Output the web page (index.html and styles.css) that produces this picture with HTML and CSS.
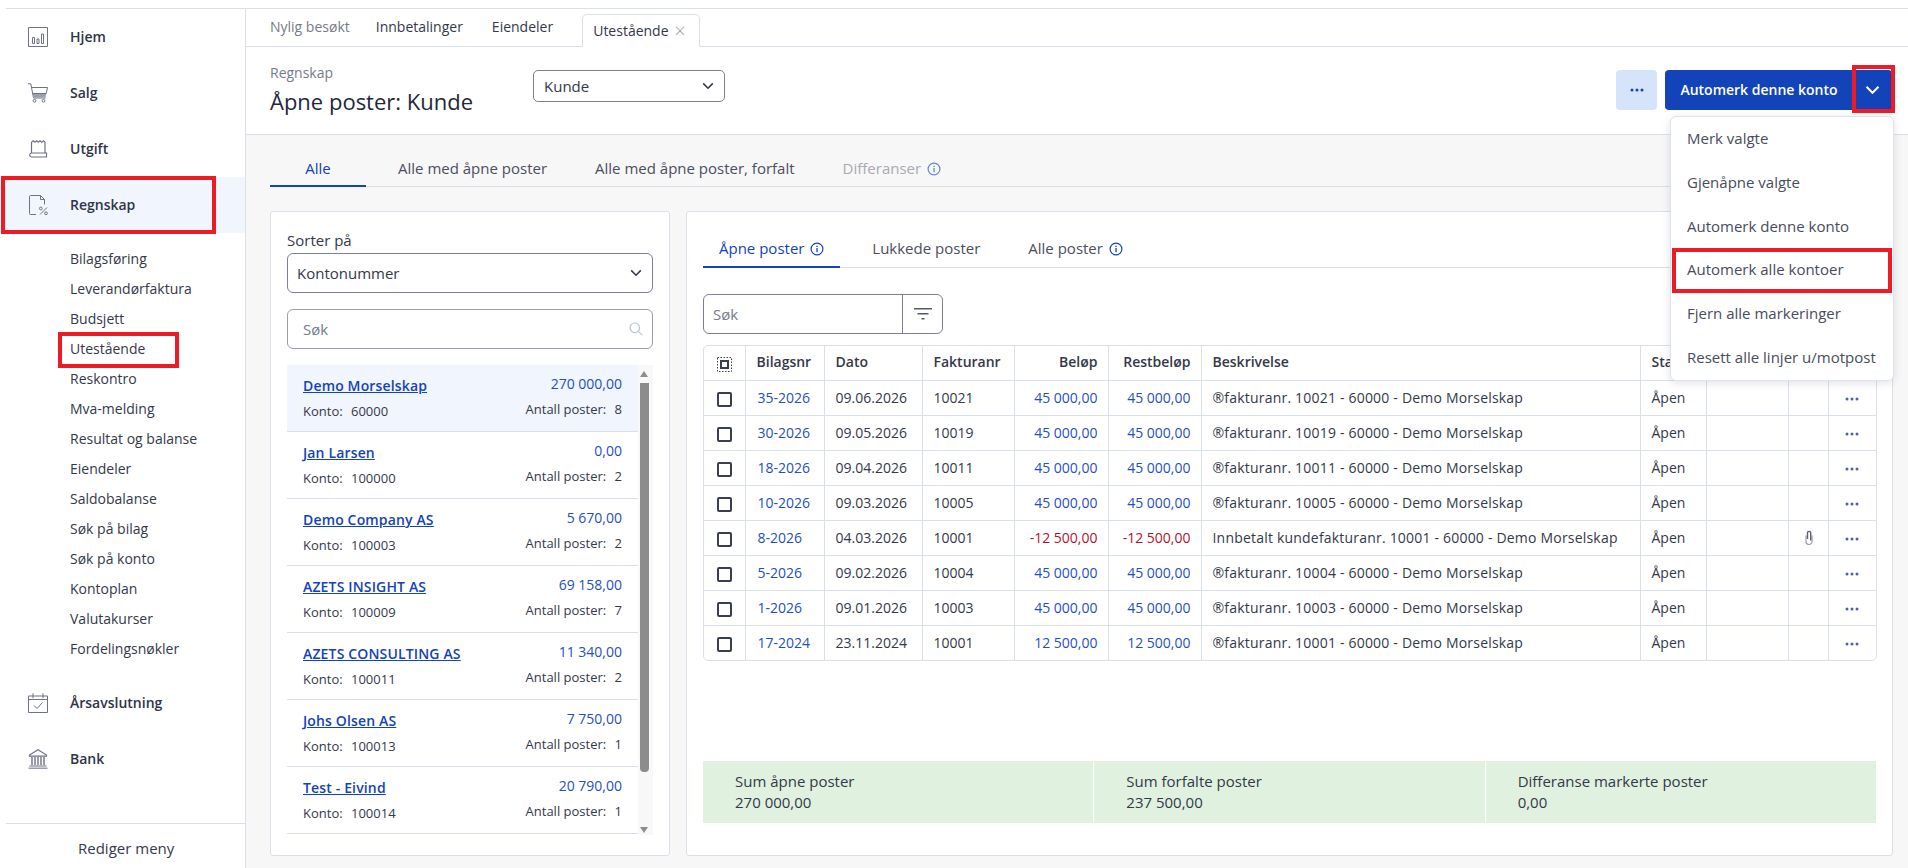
FILE: index.html
```html
<!DOCTYPE html>
<html lang="nb">
<head>
    <meta charset="UTF-8">
    <title>Åpne poster: Kunde</title>
    <link rel="stylesheet" href="styles.css">
</head>
<body>
    <svg class="sprite" xmlns="http://www.w3.org/2000/svg">
        <symbol id="i-info" viewBox="0 0 14 14">
            <circle cx="7" cy="7" r="5.9" fill="none" stroke="currentColor" stroke-width="1.2"/>
            <rect x="6.4" y="6" width="1.3" height="4.2" fill="currentColor"/>
            <rect x="6.4" y="3.7" width="1.3" height="1.4" fill="currentColor"/>
        </symbol>
        <symbol id="i-chevron" viewBox="0 0 12 8">
            <path d="M1.2 1.4 6 6.2l4.800-4.800" fill="none" stroke="currentColor" stroke-width="1.6"/>
        </symbol>
        <symbol id="i-dots" viewBox="0 0 14 4">
            <circle cx="2" cy="2" r="1.5" fill="currentColor"/>
            <circle cx="7" cy="2" r="1.5" fill="currentColor"/>
            <circle cx="12" cy="2" r="1.5" fill="currentColor"/>
        </symbol>
    </svg>

    <div class="app">
        <nav class="sidebar">
            <a class="nav-item">
                <svg class="nav-icon" viewBox="0 0 20 20"><path d="M.5.5h19v19H.5z" fill="none" stroke="#6d7385"/><path d="M4.5 10.5h2v6h-2zM9 12h2v4.500H9zM13.500 7h2v9.500h-2z" fill="none" stroke="#6d7385"/></svg>
                <span>Hjem</span>
            </a>
            <a class="nav-item">
                <svg class="nav-icon" viewBox="0 0 20 20"><path d="M0 .8h2.800l2.700 14.200h12" fill="none" stroke="#6d7385"/><path d="M3.500 4.500h16l-1.300 6H4.600" fill="none" stroke="#6d7385"/><path d="M4.800 11h13.400l-.7 3.500H5.500z" fill="#9a9fad"/><circle cx="6.500" cy="17.800" r="1.400" fill="none" stroke="#6d7385"/><circle cx="15.500" cy="17.800" r="1.400" fill="none" stroke="#6d7385"/></svg>
                <span>Salg</span>
            </a>
            <a class="nav-item">
                <svg class="nav-icon" viewBox="0 0 20 20"><path d="M3.500 14V3M17 14V3M3.500 3.200 5.200 1.800l1.700 1.400 1.700-1.400 1.700 1.400 1.700-1.400 1.700 1.400 1.700-1.400L17 3.200" fill="none" stroke="#6d7385" stroke-width="1.200"/><path d="M18.500 14H3.500a2 2 0 0 0-1.800 2 2 2 0 0 0 1.800 2h15z" fill="none" stroke="#6d7385" stroke-width="1.200"/></svg>
                <span>Utgift</span>
            </a>
            <a class="nav-item nav-current">
                <svg class="nav-icon" viewBox="0 0 20 20"><path d="M8 19.500H2.500a1 1 0 0 1-1-1v-17a1 1 0 0 1 1-1h10v4h4v5" fill="none" stroke="#6d7385"/><path d="M12.500.5l4 4" stroke="#6d7385"/><path d="M12 19.500l7-7" stroke="#6d7385"/><circle cx="12.800" cy="13.500" r="1.400" fill="none" stroke="#6d7385"/><circle cx="18" cy="18.300" r="1.400" fill="none" stroke="#6d7385"/></svg>
                <span>Regnskap</span>
            </a>
            <div class="subnav">
                <a>Bilagsføring</a>
                <a>Leverandørfaktura</a>
                <a>Budsjett</a>
                <a>Utestående</a>
                <a>Reskontro</a>
                <a>Mva-melding</a>
                <a>Resultat og balanse</a>
                <a>Eiendeler</a>
                <a>Saldobalanse</a>
                <a>Søk på bilag</a>
                <a>Søk på konto</a>
                <a>Kontoplan</a>
                <a>Valutakurser</a>
                <a>Fordelingsnøkler</a>
            </div>
            <a class="nav-item">
                <svg class="nav-icon" viewBox="0 0 20 20"><path d="M.5 3h19v16.500H.5zM.5 6.500h19M5 .3v5M15 .3v5" fill="none" stroke="#6d7385"/><path d="M6 12.500l3 3 5.500-6" fill="none" stroke="#6d7385"/></svg>
                <span>Årsavslutning</span>
            </a>
            <a class="nav-item">
                <svg class="nav-icon" viewBox="0 0 20 20"><path d="M10 .8 18.500 6v1.200h-17V6z" fill="none" stroke="#6d7385" stroke-width="1.200"/><path d="M1.500 17h17M.5 19.300h19" stroke="#9a9fad" stroke-width="1.600"/><path d="M4 8v8M7 8v8M10 8v8M13 8v8M16 8v8" stroke="#6d7385" stroke-width="1.400"/></svg>
                <span>Bank</span>
            </a>
            <a class="edit-menu">Rediger meny</a>
        </nav>

        <main class="main">
            <div class="recent">
                <span class="recent-label">Nylig besøkt</span>
                <a class="recent-link">Innbetalinger</a>
                <a class="recent-link">Eiendeler</a>
                <a class="recent-tab">Utestående <span class="tab-close">×</span></a>
            </div>

            <header class="page-head">
                <div class="page-title">
                    <div class="crumb">Regnskap</div>
                    <h1>Åpne poster: Kunde</h1>
                </div>
                <div class="type-select">Kunde <svg class="chev"><use href="#i-chevron"/></svg></div>
                <div class="head-actions">
                    <button class="btn-more"><svg class="dots"><use href="#i-dots"/></svg></button>
                    <div class="btn-split">
                        <button class="btn-primary">Automerk denne konto</button>
                        <button class="btn-caret"><svg class="chev"><use href="#i-chevron"/></svg></button>
                    </div>
                </div>
            </header>

            <div class="content">
                <div class="tabs">
                    <a class="tab tab-active tab-first">Alle</a>
                    <a class="tab">Alle med åpne poster</a>
                    <a class="tab">Alle med åpne poster, forfalt</a>
                    <a class="tab tab-muted">Differanser <svg class="info"><use href="#i-info"/></svg></a>
                </div>

                <div class="panels">
                    <section class="panel accounts">
                        <label class="sort-label">Sorter på</label>
                        <div class="field field-select">Kontonummer <svg class="chev"><use href="#i-chevron"/></svg></div>
                        <div class="field field-search">
                            <span class="placeholder">Søk</span>
                            <svg class="search-icon" viewBox="0 0 14 14"><circle cx="5.800" cy="5.800" r="4.800" fill="none" stroke="currentColor" stroke-width="1.200"/><path d="M9.300 9.300 13.200 13.200" stroke="currentColor" stroke-width="1.200"/></svg>
                        </div>
                        <div class="account-wrap">
                            <div class="account-list">
                                <div class="account account-current">
                                    <div class="acc-left"><a class="acc-name">Demo Morselskap</a><div class="acc-meta">Konto: <span>60000</span></div></div>
                                    <div class="acc-right"><div class="acc-sum">270 000,00</div><div class="acc-meta">Antall poster: <span>8</span></div></div>
                                </div>
                                <div class="account">
                                    <div class="acc-left"><a class="acc-name">Jan Larsen</a><div class="acc-meta">Konto: <span>100000</span></div></div>
                                    <div class="acc-right"><div class="acc-sum">0,00</div><div class="acc-meta">Antall poster: <span>2</span></div></div>
                                </div>
                                <div class="account">
                                    <div class="acc-left"><a class="acc-name">Demo Company AS</a><div class="acc-meta">Konto: <span>100003</span></div></div>
                                    <div class="acc-right"><div class="acc-sum">5 670,00</div><div class="acc-meta">Antall poster: <span>2</span></div></div>
                                </div>
                                <div class="account">
                                    <div class="acc-left"><a class="acc-name">AZETS INSIGHT AS</a><div class="acc-meta">Konto: <span>100009</span></div></div>
                                    <div class="acc-right"><div class="acc-sum">69 158,00</div><div class="acc-meta">Antall poster: <span>7</span></div></div>
                                </div>
                                <div class="account">
                                    <div class="acc-left"><a class="acc-name">AZETS CONSULTING AS</a><div class="acc-meta">Konto: <span>100011</span></div></div>
                                    <div class="acc-right"><div class="acc-sum">11 340,00</div><div class="acc-meta">Antall poster: <span>2</span></div></div>
                                </div>
                                <div class="account">
                                    <div class="acc-left"><a class="acc-name">Johs Olsen AS</a><div class="acc-meta">Konto: <span>100013</span></div></div>
                                    <div class="acc-right"><div class="acc-sum">7 750,00</div><div class="acc-meta">Antall poster: <span>1</span></div></div>
                                </div>
                                <div class="account">
                                    <div class="acc-left"><a class="acc-name">Test - Eivind</a><div class="acc-meta">Konto: <span>100014</span></div></div>
                                    <div class="acc-right"><div class="acc-sum">20 790,00</div><div class="acc-meta">Antall poster: <span>1</span></div></div>
                                </div>
                            </div>
                            <div class="scrollbar">
                                <span class="arrow-up"></span>
                                <span class="thumb"></span>
                                <span class="arrow-down"></span>
                            </div>
                        </div>
                    </section>

                    <section class="panel entries">
                        <div class="subtabs">
                            <a class="subtab subtab-active">Åpne poster <svg class="info"><use href="#i-info"/></svg></a>
                            <a class="subtab">Lukkede poster</a>
                            <a class="subtab">Alle poster <svg class="info"><use href="#i-info"/></svg></a>
                        </div>
                        <div class="table-search">
                            <span class="placeholder">Søk</span>
                            <span class="filter-btn">
                                <svg viewBox="0 0 18 12" class="filter-icon"><path d="M0 0h18v1.600H0zM3.500 5h11v1.600h-11zM7.500 10h3v1.600h-3z" fill="#555a6a"/></svg>
                            </span>
                        </div>
                        <div class="table-wrap">
                            <table class="entry-table">
                                <colgroup>
                                    <col class="c-check"><col class="c-bilag"><col class="c-dato"><col class="c-faktura"><col class="c-belop"><col class="c-rest"><col class="c-desc"><col class="c-status"><col class="c-blank"><col class="c-clip"><col class="c-more">
                                </colgroup>
                                <thead>
                                    <tr>
                                        <th class="check-cell"><svg class="select-all" viewBox="0 0 15 15"><path d="M.5.500h14v14H.5z" fill="none" stroke="#3a3f50" stroke-dasharray="1.500 1.500"/><path d="M4 4h7v7H4z" fill="none" stroke="#3a3f50" stroke-width="2"/></svg></th>
                                        <th>Bilagsnr</th><th>Dato</th><th>Fakturanr</th><th class="num">Beløp</th><th class="num">Restbeløp</th><th>Beskrivelse</th><th>Status</th><th></th><th></th><th></th>
                                    </tr>
                                </thead>
                                <tbody>
                                    <tr>
                                        <td class="check-cell"><span class="checkbox"></span></td><td class="blue">35-2026</td><td>09.06.2026</td><td>10021</td><td class="num blue">45 000,00</td><td class="num blue">45 000,00</td><td class="desc">®fakturanr. 10021 - 60000 - Demo Morselskap</td><td>Åpen</td><td></td><td></td><td class="more-cell"><svg class="dots"><use href="#i-dots"/></svg></td>
                                    </tr>
                                    <tr>
                                        <td class="check-cell"><span class="checkbox"></span></td><td class="blue">30-2026</td><td>09.05.2026</td><td>10019</td><td class="num blue">45 000,00</td><td class="num blue">45 000,00</td><td class="desc">®fakturanr. 10019 - 60000 - Demo Morselskap</td><td>Åpen</td><td></td><td></td><td class="more-cell"><svg class="dots"><use href="#i-dots"/></svg></td>
                                    </tr>
                                    <tr>
                                        <td class="check-cell"><span class="checkbox"></span></td><td class="blue">18-2026</td><td>09.04.2026</td><td>10011</td><td class="num blue">45 000,00</td><td class="num blue">45 000,00</td><td class="desc">®fakturanr. 10011 - 60000 - Demo Morselskap</td><td>Åpen</td><td></td><td></td><td class="more-cell"><svg class="dots"><use href="#i-dots"/></svg></td>
                                    </tr>
                                    <tr>
                                        <td class="check-cell"><span class="checkbox"></span></td><td class="blue">10-2026</td><td>09.03.2026</td><td>10005</td><td class="num blue">45 000,00</td><td class="num blue">45 000,00</td><td class="desc">®fakturanr. 10005 - 60000 - Demo Morselskap</td><td>Åpen</td><td></td><td></td><td class="more-cell"><svg class="dots"><use href="#i-dots"/></svg></td>
                                    </tr>
                                    <tr>
                                        <td class="check-cell"><span class="checkbox"></span></td><td class="blue">8-2026</td><td>04.03.2026</td><td>10001</td><td class="num red">-12 500,00</td><td class="num red">-12 500,00</td><td class="desc">Innbetalt kundefakturanr. 10001 - 60000 - Demo Morselskap</td><td>Åpen</td><td></td>
                                        <td class="clip-cell"><svg class="clip" viewBox="0 0 8 15"><path d="M1 5.500v6a3 3 0 0 0 6 0v-6" fill="none" stroke="#9a9fad" stroke-width="1.200"/><path d="M2.500 9V3a1.600 1.600 0 0 1 3.200 0v7.500" fill="none" stroke="#5c6070" stroke-width="1.400"/></svg></td>
                                        <td class="more-cell"><svg class="dots"><use href="#i-dots"/></svg></td>
                                    </tr>
                                    <tr>
                                        <td class="check-cell"><span class="checkbox"></span></td><td class="blue">5-2026</td><td>09.02.2026</td><td>10004</td><td class="num blue">45 000,00</td><td class="num blue">45 000,00</td><td class="desc">®fakturanr. 10004 - 60000 - Demo Morselskap</td><td>Åpen</td><td></td><td></td><td class="more-cell"><svg class="dots"><use href="#i-dots"/></svg></td>
                                    </tr>
                                    <tr>
                                        <td class="check-cell"><span class="checkbox"></span></td><td class="blue">1-2026</td><td>09.01.2026</td><td>10003</td><td class="num blue">45 000,00</td><td class="num blue">45 000,00</td><td class="desc">®fakturanr. 10003 - 60000 - Demo Morselskap</td><td>Åpen</td><td></td><td></td><td class="more-cell"><svg class="dots"><use href="#i-dots"/></svg></td>
                                    </tr>
                                    <tr>
                                        <td class="check-cell"><span class="checkbox"></span></td><td class="blue">17-2024</td><td>23.11.2024</td><td>10001</td><td class="num blue">12 500,00</td><td class="num blue">12 500,00</td><td class="desc">®fakturanr. 10001 - 60000 - Demo Morselskap</td><td>Åpen</td><td></td><td></td><td class="more-cell"><svg class="dots"><use href="#i-dots"/></svg></td>
                                    </tr>
                                </tbody>
                            </table>
                        </div>
                        <div class="sum-bar">
                            <div class="sum-cell">Sum åpne poster<br>270 000,00</div>
                            <div class="sum-cell">Sum forfalte poster<br>237 500,00</div>
                            <div class="sum-cell">Differanse markerte poster<br>0,00</div>
                        </div>
                    </section>
                </div>
            </div>
        </main>
    </div>

    <div class="action-menu">
        <a>Merk valgte</a>
        <a>Gjenåpne valgte</a>
        <a>Automerk denne konto</a>
        <a>Automerk alle kontoer</a>
        <a>Fjern alle markeringer</a>
        <a>Resett alle linjer u/motpost</a>
    </div>

    <!-- red annotation boxes drawn on top of the screenshot -->
    <div class="mark mark-regnskap"></div>
    <div class="mark mark-utestaende"></div>
    <div class="mark mark-caret"></div>
    <div class="mark mark-menu"></div>
</body>
</html>
```

FILE: styles.css
```css
* {
    box-sizing: border-box;
}
body {
    margin: 0;
    height: 868px;
    overflow: hidden;
    position: relative;
    background: #fff;
    color: #343849;
    font-family: "Open Sans", "Noto Sans", sans-serif;
    font-size: 14px;
    line-height: 19px;
}
.sprite {
    display: none;
}
.app {
    display: flex;
    height: 860px;
    margin: 8px 0 0 6px;
    border-top: 1px solid #d9e0ea;
}
a {
    color: inherit;
    text-decoration: none;
}

/* sidebar */
.sidebar {
    width: 240px;
    flex: none;
    border-right: 1px solid #d9e0ea;
    display: flex;
    flex-direction: column;
}
.nav-item {
    height: 56px;
    margin-left: -6px;
    padding-left: 28px;
    display: flex;
    align-items: center;
    font-weight: 600;
    color: #2f3446;
}
.nav-item span {
    padding-bottom: 2px;
}
.nav-current {
    background: #f1f5fd;
}
.nav-icon {
    width: 20px;
    height: 20px;
    margin-right: 22px;
    flex: none;
}
.subnav {
    padding: 11px 0 11px 64px;
    display: flex;
    flex-direction: column;
}
.subnav a {
    height: 30px;
    line-height: 30px;
}
.edit-menu {
    margin-top: auto;
    height: 45px;
    padding: 15px 0 0 72px;
    font-size: 15px;
    border-top: 1px solid #d9e0ea;
}

/* right side */
.main {
    flex: 1;
    display: flex;
    flex-direction: column;
    min-width: 0;
}
.recent {
    height: 38px;
    flex: none;
    padding: 0 0 0 24px;
    display: flex;
    align-items: flex-end;
    border-bottom: 1px solid #d9e0ea;
    line-height: 35px;
}
.recent-label, .recent-link {
    height: 37px;
    margin-right: 26px;
}
.recent-label {
    color: #767b88;
}
.recent-link {
    margin-right: 29px;
}
.recent-link + .recent-tab {
    margin-left: 0;
}
.recent-tab {
    height: 33px;
    margin: 0 0 -1px;
    width: 118px;
    padding-left: 10px;
    background: #fff;
    border: 1px solid #d9e0ea;
    border-bottom-color: #fff;
    border-radius: 5px 5px 0 0;
    line-height: 31px;
}
.tab-close {
    margin-left: 2px;
    color: #9aa0ad;
    font-size: 20px;
    font-weight: 300;
    line-height: 18px;
    vertical-align: -2px;
}
.page-head {
    height: 88px;
    flex: none;
    padding: 16px 16px 0 24px;
    display: flex;
    align-items: flex-start;
    border-bottom: 1px solid #d9e0ea;
}
.page-title {
    width: 263px;
    flex: none;
}
.crumb {
    color: #767b88;
}
h1 {
    margin: 4px 0 0;
    font-size: 22px;
    line-height: 30px;
    font-weight: 400;
    color: #23273a;
}
.type-select {
    width: 192px;
    height: 32px;
    margin-top: 7px;
    padding: 0 10px;
    display: flex;
    align-items: center;
    justify-content: space-between;
    border: 1px solid #7c8090;
    border-radius: 5px;
    background: #fff;
    font-size: 15px;
}
.chev {
    width: 12px;
    height: 8px;
    color: #343849;
}
.head-actions {
    margin: 7px 0 0 auto;
    display: flex;
    gap: 8px;
}
button {
    border: none;
    font-family: inherit;
    font-size: 14px;
    cursor: pointer;
    height: 40px;
    padding: 0;
}
.btn-more {
    width: 41px;
    background: #d6e4fb;
    border-radius: 4px;
    color: #1243b8;
}
.dots {
    display: block;
    width: 14px;
    height: 4px;
    margin: auto;
}
.btn-split {
    display: flex;
}
.btn-primary {
    width: 188px;
    background: #1243b8;
    color: #fff;
    font-weight: 600;
    border-radius: 4px 0 0 4px;
    padding-bottom: 2px;
}
.btn-caret {
    width: 39px;
    background: #1243b8;
    border-radius: 0 4px 4px 0;
}
.btn-caret .chev {
    color: #fff;
    display: block;
    margin: auto;
    width: 15px;
    height: 10px;
    stroke-width: 2;
}

/* content area */
.content {
    flex: 1;
    min-height: 0;
    background: #f7f7f7;
    padding: 0 15px 12px 24px;
    display: flex;
    flex-direction: column;
}
.tabs {
    height: 52px;
    flex: none;
    display: flex;
    align-items: flex-end;
    border-bottom: 1px solid #d9e0ea;
    font-size: 15px;
}
.tab {
    height: 52px;
    padding: 25px 24px 0;
    color: #4a4e5e;
}
.tab-first {
    width: 96px;
    padding: 25px 0 0;
    text-align: center;
    margin-right: 8px;
}
.tab-active {
    color: #1243b8;
    border-bottom: 2px solid #1243b8;
    margin-bottom: -1px;
    height: 53px;
}
.tab-muted {
    color: #a7aab2;
}
.tab-muted .info {
    color: #5f86d4;
}
.info {
    width: 14px;
    height: 14px;
    margin-left: 2px;
    vertical-align: -2px;
    color: #1243b8;
}
.panels {
    flex: 1;
    min-height: 0;
    margin-top: 24px;
    display: flex;
    gap: 16px;
}
.panel {
    background: #fff;
    border: 1px solid #d9e0ea;
    border-radius: 3px;
}

/* accounts panel */
.accounts {
    width: 400px;
    flex: none;
    padding: 19px 16px 0;
}
.sort-label {
    display: block;
    height: 22px;
    font-size: 15px;
}
.field {
    height: 40px;
    border: 1px solid #7c8090;
    border-radius: 6px;
    display: flex;
    align-items: center;
    justify-content: space-between;
    padding: 0 10px 0 9px;
    background: #fff;
    font-size: 15px;
}
.field-search {
    margin-top: 16px;
    padding: 0 9px 0 15px;
    border-color: #9a9eaa;
}
.placeholder {
    color: #777b88;
    font-size: 15px;
}
.search-icon {
    width: 14px;
    height: 14px;
    color: #b9c3d6;
}
.account-wrap {
    margin-top: 16px;
    display: flex;
    height: 475px;
}
.account-list {
    width: 351px;
    flex: none;
}
.account {
    height: 67px;
    padding: 0 16px;
    display: flex;
    justify-content: space-between;
    border-bottom: 1px solid #d9e0ea;
}
.account-current {
    background: #f1f5fd;
}
.acc-left {
    padding-top: 11px;
}
.acc-right {
    padding-top: 9px;
    text-align: right;
}
.acc-name {
    display: block;
    height: 26px;
    font-weight: 600;
    letter-spacing: 0.15px;
    color: #1243b8;
    text-decoration: underline;
}
.acc-sum {
    height: 26px;
    color: #1f4fc0;
}
.acc-meta {
    font-size: 13px;
    line-height: 18px;
}
.acc-meta span {
    margin-left: 5px;
}
.scrollbar {
    width: 15px;
    height: 470px;
    background: #f8f8f9;
    display: flex;
    flex-direction: column;
    align-items: center;
    padding: 6px 3px 0 0;
}
.arrow-up, .arrow-down {
    width: 0;
    height: 0;
    border-left: 4px solid transparent;
    border-right: 4px solid transparent;
    flex: none;
}
.arrow-up {
    border-bottom: 6px solid #8c8c8c;
}
.arrow-down {
    border-top: 6px solid #8c8c8c;
    margin-top: 55px;
}
.thumb {
    width: 9px;
    height: 389px;
    margin-top: 6px;
    background: #8c8c8c;
    border-radius: 0 0 4px 4px;
    flex: none;
}

/* entries panel */
.entries {
    flex: 1;
    min-width: 0;
    padding: 0 16px 32px;
    display: flex;
    flex-direction: column;
}
.subtabs {
    height: 56px;
    flex: none;
    display: flex;
    gap: 16px;
    border-bottom: 1px solid #d9e0ea;
    font-size: 15px;
}
.subtab {
    height: 56px;
    padding: 27px 16px 0;
    color: #4a4e5e;
}
.subtab-active {
    color: #1243b8;
    border-bottom: 2px solid #1243b8;
}
.table-search {
    width: 240px;
    height: 40px;
    margin-top: 26px;
    display: flex;
    align-items: center;
    justify-content: space-between;
    padding-left: 9px;
    border: 1px solid #7c8090;
    border-radius: 6px;
}
.filter-btn {
    width: 40px;
    height: 100%;
    border-left: 1px solid #7c8090;
    display: flex;
    align-items: center;
    justify-content: center;
}
.filter-icon {
    width: 18px;
    height: 12px;
}
.table-wrap {
    margin-top: 11px;
    width: 1174px;
    border: 1px solid #d9e0ea;
    border-radius: 5px;
    overflow: hidden;
}
.entry-table {
    width: 1172px;
    table-layout: fixed;
    border-collapse: collapse;
}
.c-check { width: 41px; }
.c-bilag { width: 79px; }
.c-dato { width: 98px; }
.c-faktura { width: 92px; }
.c-belop { width: 94px; }
.c-rest { width: 93px; }
.c-desc { width: 439px; }
.c-status { width: 66px; }
.c-blank { width: 82px; }
.c-clip { width: 40px; }
.c-more { width: 48px; }
.entry-table th, .entry-table td {
    height: 35px;
    padding: 0 10px 1px 11px;
    border-left: 1px solid #d9e0ea;
    border-top: 1px solid #d9e0ea;
    text-align: left;
    white-space: nowrap;
    overflow: hidden;
}
.entry-table th {
    height: 34px;
    padding-bottom: 2px;
    border-top: none;
    font-weight: 600;
    color: #343849;
}
.entry-table th:first-child, .entry-table td:first-child {
    border-left: none;
}
.entry-table .num {
    text-align: right;
}
.entry-table .desc {
    letter-spacing: 0.2px;
}
.entry-table .blue {
    color: #1f4fc0;
    padding-left: 12px;
}
.entry-table .num.blue, .entry-table .red {
    padding-left: 0;
}
.red {
    color: #b0122f;
}
.entry-table .check-cell {
    padding: 3px 0 0 13px;
}
.checkbox {
    display: block;
    width: 15px;
    height: 15px;
    border: 2px solid #3a3f50;
    border-radius: 2px;
}
.select-all {
    display: block;
    width: 15px;
    height: 15px;
}
.entry-table .more-cell {
    padding: 2px 0 0;
}
.more-cell .dots {
    color: #4f6590;
}
.entry-table .clip-cell {
    padding: 0 0 0 16px;
}
.clip {
    display: block;
    width: 8px;
    height: 15px;
}
.sum-bar {
    margin-top: auto;
    height: 62px;
    display: flex;
    gap: 1px;
    flex: none;
}
.sum-cell {
    flex: 1;
    background: #e0f1df;
    padding: 10px 0 0 32px;
    line-height: 21px;
    font-size: 15px;
}

/* dropdown under the caret */
.action-menu {
    position: absolute;
    top: 116px;
    left: 1670px;
    width: 224px;
    height: 265px;
    padding: 0;
    background: #fff;
    border: 1px solid #dfe3ea;
    border-radius: 6px;
    box-shadow: 0 2px 8px rgba(40, 50, 80, 0.14);
    display: flex;
    flex-direction: column;
    color: #484c5c;
    font-size: 15px;
}
.action-menu a {
    height: 44px;
    line-height: 43px;
    padding-left: 16px;
    white-space: nowrap;
}

/* annotations */
.mark {
    position: absolute;
    border: 4px solid #ed1c24;
}
.mark-regnskap { left: 1px; top: 176px; width: 215px; height: 58px; }
.mark-utestaende { left: 58px; top: 332px; width: 121px; height: 36px; }
.mark-caret { left: 1852px; top: 65px; width: 43px; height: 48px; }
.mark-menu { left: 1672px; top: 248px; width: 220px; height: 45px; }
```
